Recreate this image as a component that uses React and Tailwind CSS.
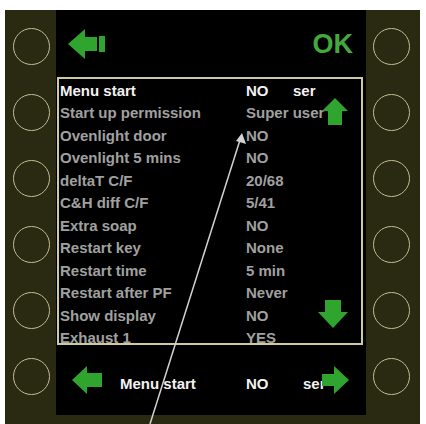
import React from "react";

const rows = [
  ["Menu start", "NO", "ser"],
  ["Start up permission", "Super user", ""],
  ["Ovenlight door", "NO", ""],
  ["Ovenlight 5 mins", "NO", ""],
  ["deltaT C/F", "20/68", ""],
  ["C&H diff C/F", "5/41", ""],
  ["Extra soap", "NO", ""],
  ["Restart key", "None", ""],
  ["Restart time", "5 min", ""],
  ["Restart after PF", "Never", ""],
  ["Show display", "NO", ""],
  ["Exhaust 1", "YES", ""],
];

function Circles({ pad }) {
  return (
    <div className={`flex flex-col pt-[18px] gap-[29px] ${pad}`}>
      {[0, 1, 2, 3, 4, 5].map((i) => (
        <div
          key={i}
          className="w-[37px] h-[37px] rounded-full border-[1.5px] border-[#c2bc92]"
        />
      ))}
    </div>
  );
}

const G = "#2fa42f";

export default function App() {
  return (
    <div className="relative w-[426px] h-[424px] bg-white overflow-hidden pt-[10px] pl-[5px] font-['Liberation_Sans',Arial,sans-serif] font-bold">
      <div className="flex w-[415px] h-[414px] bg-[#2a2912]">
        <Circles pad="pl-[8px] w-[51px]" />
        <div className="w-[310px] flex flex-col">
          <div className="h-[405px] bg-black flex flex-col">
            <div className="h-[67px] flex items-center justify-between pl-[12px] pr-[13px]">
              <svg width="37" height="30" viewBox="0 0 37 30">
                <path d="M0 15 L17 0 L17 8 L29 8 L29 22 L17 22 L17 30 Z" fill={G} />
                <rect x="31" y="7" width="6" height="16" fill={G} />
              </svg>
              <span className="text-[27px] leading-none text-[#45a83c] mt-[2px]">OK</span>
            </div>
            <div className="relative ml-[1px] w-[306px] h-[268px] border-2 border-[#cfc9a1] overflow-hidden pl-[1px]">
              {rows.map((r, i) => (
                <div
                  key={i}
                  className={`flex h-[22.5px] items-center text-[15px] leading-none whitespace-nowrap ${
                    i === 0 ? "text-[#f2f2f2]" : "text-[#a0a0a0]"
                  }`}
                >
                  <span className="w-[186px]">{r[0]}</span>
                  <span className="w-[47px]">{r[1]}</span>
                  <span>{r[2]}</span>
                </div>
              ))}
              <svg className="absolute left-[263px] top-[19px]" width="26" height="27" viewBox="0 0 26 27">
                <path d="M13 0 L26 13 L20 13 L20 27 L6 27 L6 13 L0 13 Z" fill={G} />
              </svg>
              <svg className="absolute left-[259px] top-[221px]" width="30" height="28" viewBox="0 0 30 28">
                <path d="M7 0 L23 0 L23 12 L30 12 L15 28 L0 12 L7 12 Z" fill={G} />
              </svg>
            </div>
            <div className="flex-1 flex items-center pl-[16px] text-[15px] leading-none text-[#f2f2f2] whitespace-nowrap">
              <svg width="30" height="28" viewBox="0 0 30 28">
                <path d="M0 14 L15 0 L15 7 L30 7 L30 21 L15 21 L15 28 Z" fill={G} />
              </svg>
              <span className="ml-[18px] w-[126px] mt-[6px]">Menu start</span>
              <span className="w-[57px] mt-[6px]">NO</span>
              <span className="mt-[6px]">ser</span>
              <svg className="-ml-[4px]" width="27" height="28" viewBox="0 0 27 28">
                <path d="M0 8 L12 8 L12 0 L27 14 L12 28 L12 20 L0 20 Z" fill={G} />
              </svg>
            </div>
          </div>
        </div>
        <Circles pad="pl-[7px] w-[54px]" />
      </div>
      <svg className="absolute inset-0 pointer-events-none" width="426" height="424" viewBox="0 0 426 424">
        <line x1="150" y1="424" x2="240" y2="140" stroke="#d2d2d2" strokeWidth="1.5" />
        <path d="M242 133 L246 144 L236 141 Z" fill="#d2d2d2" />
      </svg>
    </div>
  );
}
